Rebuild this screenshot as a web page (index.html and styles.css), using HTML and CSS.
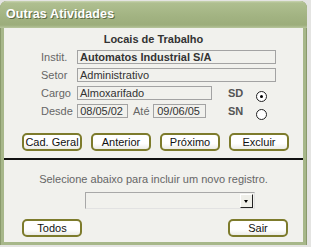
FILE: index.html
```html
<!DOCTYPE html>
<html lang="pt">
<head>
<meta charset="UTF-8">
<meta name="viewport" content="width=device-width, initial-scale=1.0">
<title>Outras Atividades</title>
<link rel="stylesheet" href="styles.css">
</head>
<body>
<div class="window">
  <div class="titlebar">Outras Atividades</div>
  <div class="content">
    <h1 class="heading">Locais de Trabalho</h1>

    <div class="row">
      <span class="label">Instit.</span>
      <div class="field field-wide bold">Automatos Industrial S/A</div>
    </div>
    <div class="row">
      <span class="label">Setor</span>
      <div class="field field-wide">Administrativo</div>
    </div>
    <div class="row">
      <span class="label">Cargo</span>
      <div class="field field-mid">Almoxarifado</div>
      <span class="turno">SD</span>
      <span class="radio checked"></span>
    </div>
    <div class="row">
      <span class="label">Desde</span>
      <div class="field field-date">08/05/02</div>
      <span class="label-ate">Até</span>
      <div class="field field-date2">09/06/05</div>
      <span class="turno">SN</span>
      <span class="radio"></span>
    </div>

    <div class="buttons">
      <button type="button" class="btn">Cad. Geral</button>
      <button type="button" class="btn">Anterior</button>
      <button type="button" class="btn">Próximo</button>
      <button type="button" class="btn">Excluir</button>
    </div>

    <div class="separator"></div>

    <p class="hint">Selecione abaixo para incluir um novo registro.</p>
    <div class="select">
      <span class="select-arrow"></span>
    </div>

    <div class="footer">
      <button type="button" class="btn">Todos</button>
      <button type="button" class="btn">Sair</button>
    </div>
  </div>
</div>
</body>
</html>
```

FILE: styles.css
```css
body {
  margin: 0;
  padding: 0;
  width: 311px;
  height: 247px;
  overflow: hidden;
  background-color: #e4e4e2;
  font-family: "Liberation Sans", Arial, sans-serif;
  font-size: 11px;
}

.window {
  width: 299px;
  height: 244px;
  margin-top: 1px;
  padding: 0 4px 0 4px;
  background-color: #a7b78a;
  border-radius: 7px 7px 0 0;
  box-shadow: inset 1px 0 0 #8a9a6c, inset -1px 0 0 #8a9a6c;
  display: flex;
  flex-direction: column;
}

.titlebar {
  height: 27px;
  margin: 0 -4px;
  padding-left: 6px;
  box-sizing: border-box;
  border-radius: 7px 7px 0 0;
  background: linear-gradient(#c9d4b1 0, #afbf90 2px, #a3b483 14px, #9cad7b 24px, #b7c59c 27px);
  color: #fff;
  font-weight: bold;
  font-size: 12.5px;
  line-height: 27px;
  text-shadow: 1px 1px 0 #5d6b45;
  letter-spacing: 0.1px;
}

.content {
  flex: 1;
  margin-bottom: 3px;
  background-color: #f1f1ed;
  display: flex;
  flex-direction: column;
}

.heading {
  margin: 5px 0 4px 0;
  font-size: 11px;
  font-weight: bold;
  color: #333;
  text-align: center;
  line-height: 13px;
}

.row {
  display: flex;
  align-items: center;
  height: 14px;
  margin-bottom: 4px;
  padding-left: 37px;
  color: #666;
}

.label {
  width: 36px;
}

.field {
  height: 14px;
  box-sizing: border-box;
  border: 1px solid #a3a3a3;
  padding: 0 2px;
  line-height: 12px;
  color: #333;
  white-space: nowrap;
}

.bold {
  font-weight: bold;
}

.field-wide {
  width: 199px;
}

.field-mid {
  width: 135px;
}

.field-date {
  width: 51px;
  text-align: right;
  padding-right: 4px;
}

.label-ate {
  margin-left: 5px;
  width: 20px;
}

.field-date2 {
  width: 53px;
  text-align: right;
  padding-right: 5px;
}

.turno {
  font-weight: bold;
  color: #555;
  margin-left: auto;
  width: 28px;
}

.field-mid + .turno {
  margin-left: 16px;
}

.field-date2 + .turno {
  margin-left: 22px;
}

.radio {
  width: 11px;
  height: 11px;
  box-sizing: border-box;
  border: 1px solid #222;
  border-radius: 50%;
  background-color: #fff;
  position: relative;
  top: 3px;
}

.radio.checked::after {
  content: "";
  position: absolute;
  left: 3px;
  top: 3px;
  width: 3px;
  height: 3px;
  border-radius: 50%;
  background-color: #000;
}

.buttons {
  display: flex;
  gap: 9px;
  padding-left: 18px;
  margin-top: 11px;
}

.btn {
  width: 60px;
  height: 18px;
  padding: 0;
  box-sizing: border-box;
  border: 2px solid #7d7b2c;
  border-radius: 5px;
  background: linear-gradient(#ffffff 0, #ffffff 60%, #ecece6 100%);
  font-family: "Liberation Sans", Arial, sans-serif;
  font-size: 11px;
  color: #111;
  line-height: 14px;
}

.separator {
  margin-top: 7px;
  height: 2px;
  background-color: #111;
}

.hint {
  margin: 13px 0 0 0;
  text-align: center;
  color: #666;
  line-height: 13px;
}

.select {
  width: 170px;
  height: 17px;
  box-sizing: border-box;
  margin: 6px 0 0 81px;
  border: 1px solid #a8a8a8;
  border-right-color: #e2e2e2;
  border-bottom-color: #e2e2e2;
  display: flex;
  justify-content: flex-end;
  align-items: center;
  padding-right: 1px;
}

.select-arrow {
  width: 13px;
  height: 14px;
  box-sizing: border-box;
  background-color: #efefe9;
  border: 1px solid #fff;
  border-right-color: #222;
  border-bottom-color: #222;
  position: relative;
}

.select-arrow::after {
  content: "";
  position: absolute;
  left: 3px;
  top: 5px;
  border-left: 2.5px solid transparent;
  border-right: 2.5px solid transparent;
  border-top: 3px solid #000;
}

.footer {
  display: flex;
  justify-content: space-between;
  padding: 0 15px 0 18px;
  margin-top: 10px;
}
```
